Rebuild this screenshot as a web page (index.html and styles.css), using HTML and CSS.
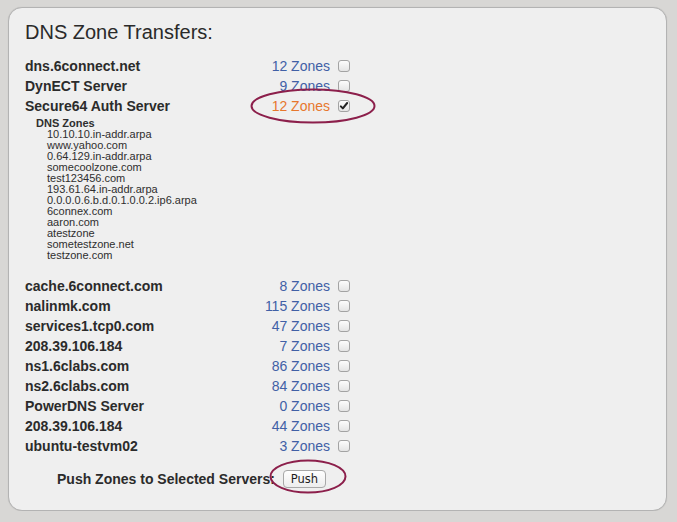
FILE: index.html
```html
<!DOCTYPE html>
<html>
<head>
<meta charset="utf-8">
<link rel="stylesheet" href="styles.css">
</head>
<body>
<div class="card">
  <h1 class="title">DNS Zone Transfers:</h1>
  <div class="servers">
    <div class="row"><span class="name">dns.6connect.net</span><span class="zones">12 Zones</span><span class="cb"></span></div>
    <div class="row"><span class="name">DynECT Server</span><span class="zones">9 Zones</span><span class="cb"></span></div>
    <div class="row"><span class="name">Secure64 Auth Server</span><span class="zones sel">12 Zones</span><span class="cb checked"><svg viewBox="0 0 12 12" width="10" height="10"><path d="M2.2 6.4 L4.6 8.8 L9.8 2.4" fill="none" stroke="#222" stroke-width="2.4" stroke-linecap="round" stroke-linejoin="round"/></svg></span></div>
    <div class="zonelist">
      <div class="zl-head">DNS Zones</div>
      <div class="zl-item">10.10.10.in-addr.arpa</div>
      <div class="zl-item">www.yahoo.com</div>
      <div class="zl-item">0.64.129.in-addr.arpa</div>
      <div class="zl-item">somecoolzone.com</div>
      <div class="zl-item">test123456.com</div>
      <div class="zl-item">193.61.64.in-addr.arpa</div>
      <div class="zl-item">0.0.0.0.6.b.d.0.1.0.0.2.ip6.arpa</div>
      <div class="zl-item">6connex.com</div>
      <div class="zl-item">aaron.com</div>
      <div class="zl-item">atestzone</div>
      <div class="zl-item">sometestzone.net</div>
      <div class="zl-item">testzone.com</div>
    </div>
    <div class="row"><span class="name">cache.6connect.com</span><span class="zones">8 Zones</span><span class="cb"></span></div>
    <div class="row"><span class="name">nalinmk.com</span><span class="zones">115 Zones</span><span class="cb"></span></div>
    <div class="row"><span class="name">services1.tcp0.com</span><span class="zones">47 Zones</span><span class="cb"></span></div>
    <div class="row"><span class="name">208.39.106.184</span><span class="zones">7 Zones</span><span class="cb"></span></div>
    <div class="row"><span class="name">ns1.6clabs.com</span><span class="zones">86 Zones</span><span class="cb"></span></div>
    <div class="row"><span class="name">ns2.6clabs.com</span><span class="zones">84 Zones</span><span class="cb"></span></div>
    <div class="row"><span class="name">PowerDNS Server</span><span class="zones">0 Zones</span><span class="cb"></span></div>
    <div class="row"><span class="name">208.39.106.184</span><span class="zones">44 Zones</span><span class="cb"></span></div>
    <div class="row"><span class="name">ubuntu-testvm02</span><span class="zones">3 Zones</span><span class="cb"></span></div>
  </div>
  <div class="push-row">
    <span class="push-label">Push Zones to Selected Servers:</span>
    <button class="push-btn">Push</button>
  </div>
  <svg class="mark mark-zones" width="126" height="36" viewBox="0 0 126 36"><ellipse cx="63" cy="18" rx="61.5" ry="16.5" fill="none" stroke="#8c1f4b" stroke-width="2"/></svg>
  <svg class="mark mark-push" width="78" height="35" viewBox="0 0 78 35"><ellipse cx="39" cy="17.5" rx="37.5" ry="16" fill="none" stroke="#8c1f4b" stroke-width="2"/></svg>
</div>
</body>
</html>
```

FILE: styles.css
```css
html, body {
  margin: 0;
  padding: 0;
  background: #d8d7d5;
}
body {
  padding: 7px 0 0 8px;
  font-family: "Liberation Sans", Arial, Helvetica, sans-serif;
  color: #2b2b2b;
}
.card {
  position: relative;
  box-sizing: border-box;
  width: 659px;
  height: 504px;
  background: #efefef;
  border: 1px solid #b3b3b3;
  border-radius: 14px;
  box-shadow: 0 0 1px rgba(0,0,0,0.15);
  padding: 12px 0 0 16px;
}
.title {
  margin: 0 0 12px 0;
  font-size: 20px;
  line-height: 24px;
  font-weight: normal;
  color: #2a2a2a;
}
.servers {
  display: flex;
  flex-direction: column;
}
.row {
  display: flex;
  align-items: center;
  height: 20px;
  font-size: 14px;
  line-height: 20px;
}
.name {
  width: 225px;
  font-weight: bold;
  color: #2b2b2b;
}
.zones {
  width: 80px;
  text-align: right;
  color: #4160a6;
}
.zones.sel {
  color: #e7772d;
}
.cb {
  box-sizing: border-box;
  width: 12px;
  height: 12px;
  margin-left: 8px;
  border: 1px solid #a3a3a3;
  border-radius: 3px;
  background: linear-gradient(#fcfcfc, #e4e4e4);
  display: flex;
  align-items: center;
  justify-content: center;
}
.cb svg {
  display: block;
}
.zonelist {
  margin: 2px 0 15px 11px;
  font-size: 11px;
  line-height: 11px;
  color: #2e2e2e;
}
.zl-head {
  font-weight: bold;
}
.zl-item {
  padding-left: 11px;
}
.push-row {
  display: flex;
  align-items: center;
  gap: 8px;
  margin-top: 13px;
  padding-left: 32px;
  height: 20px;
}
.push-label {
  font-size: 14px;
  line-height: 20px;
  font-weight: bold;
  color: #2b2b2b;
}
.push-btn {
  box-sizing: border-box;
  width: 43px;
  height: 18px;
  padding: 0;
  margin: 0;
  font-family: "DejaVu Sans", "Liberation Sans", sans-serif;
  font-size: 11.5px;
  line-height: 16px;
  color: #1e1e1e;
  background: linear-gradient(#ffffff, #ededed);
  border: 1px solid #a8a8a8;
  border-radius: 4px;
}
.mark {
  position: absolute;
  pointer-events: none;
}
.mark-zones {
  left: 241px;
  top: 80px;
}
.mark-push {
  left: 260px;
  top: 451px;
}
```
